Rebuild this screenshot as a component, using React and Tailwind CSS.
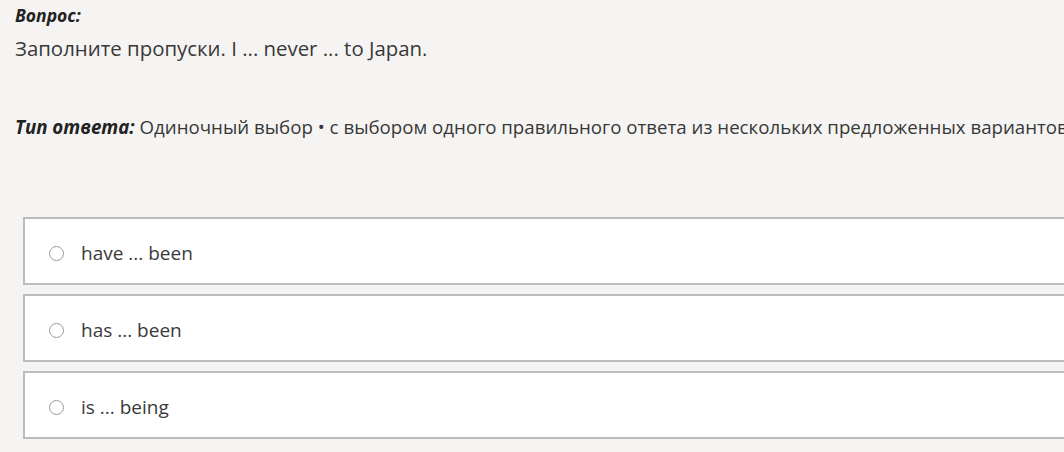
import React from 'react';

const options = ['have ... been', 'has ... been', 'is ... being'];

export default function App() {
  return (
    <div
      className="w-[1064px] h-[452px] overflow-hidden bg-[#f5f4f2] text-[#383838]"
      style={{ fontFamily: '"Open Sans", "Noto Sans", sans-serif' }}
    >
      <div className="pl-[15px] pt-[2px]">
        <div className="text-[17.5px] leading-[26px] font-bold italic text-[#222]">Вопрос:</div>
        <div className="text-[20.4px] leading-[40px]">Заполните пропуски. I ... never ... to Japan.</div>

        <div className="mt-[45px] text-[18.7px] leading-[28px] whitespace-nowrap">
          <span className="font-bold italic text-[#222]">Тип ответа:</span> Одиночный выбор • с выбором одного правильного ответа из нескольких предложенных вариантов
        </div>
      </div>

      <div className="mt-[76px] ml-[23px] w-[1100px] flex flex-col gap-[9px]">
        {options.map((o) => (
          <label
            key={o}
            className="h-[68px] bg-white border-2 border-[#bcbcbc] flex items-center pl-[24px] gap-[17px] pt-[4px]"
          >
            <span className="w-[15px] h-[15px] rounded-full border-[1.5px] border-[#9a9a9a] bg-white shrink-0" />
            <span className="text-[19px] leading-[28px] text-[#3a3a3a]">{o}</span>
          </label>
        ))}
      </div>
    </div>
  );
}
